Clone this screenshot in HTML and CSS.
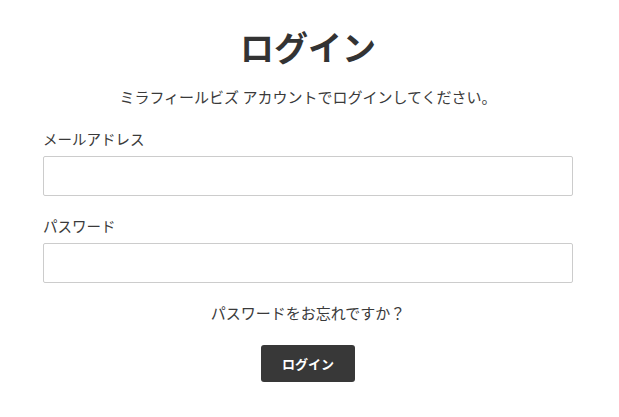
FILE: index.html
```html
<!DOCTYPE html>
<html lang="ja">
<head>
<meta charset="utf-8">
<title>ログイン</title>
<link rel="stylesheet" href="styles.css">
</head>
<body>
<main class="page">
  <h1 class="title">ログイン</h1>
  <p class="lead">ミラフィールビズ アカウントでログインしてください。</p>
  <form class="form">
    <div class="field">
      <label class="label" for="email">メールアドレス</label>
      <input class="input" id="email" type="email">
    </div>
    <div class="field">
      <label class="label" for="password">パスワード</label>
      <input class="input" id="password" type="password">
    </div>
    <a class="forgot" href="#">パスワードをお忘れですか？</a>
    <button class="btn" type="button">ログイン</button>
  </form>
</main>
</body>
</html>
```
FILE: styles.css
```css
* { box-sizing: border-box; }
html, body { margin: 0; padding: 0; background: #fff; }
body {
  font-family: "Noto Sans CJK JP", "Noto Sans", sans-serif;
  color: #3a3a3a;
}
.page {
  width: 530px;
  margin-left: 43px;
  padding-top: 26px;
  display: flex;
  flex-direction: column;
  align-items: stretch;
}
.title {
  margin: 0;
  font-size: 34px;
  line-height: 42px;
  font-weight: 700;
  text-align: center;
  color: #333;
}
.lead {
  margin: 19px 0 0;
  font-size: 15px;
  line-height: 20px;
  text-align: center;
}
.form {
  margin-top: 22px;
  display: flex;
  flex-direction: column;
  gap: 20px;
}
.field {
  display: flex;
  flex-direction: column;
  gap: 7px;
}
.label {
  font-size: 14.5px;
  line-height: 20px;
}
.input {
  height: 40px;
  width: 100%;
  border: 1px solid #ccc;
  border-radius: 2px;
  background: #fff;
  margin: 0;
}
.forgot {
  align-self: center;
  font-size: 15px;
  line-height: 20px;
  color: #3a3a3a;
  text-decoration: none;
}
.btn {
  align-self: center;
  margin-top: 2px;
  width: 94px;
  height: 37px;
  border: 0;
  border-radius: 3px;
  background: #383838;
  color: #fff;
  font-family: "Noto Sans CJK JP", "Noto Sans", sans-serif;
  font-size: 13px;
  font-weight: 700;
  padding: 0;
}
```
